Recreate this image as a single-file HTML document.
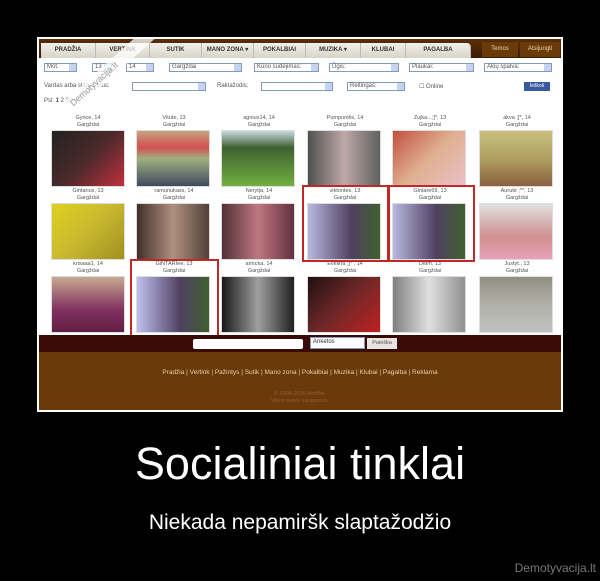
<!DOCTYPE html>
<html><head><meta charset="utf-8"><style>
*{margin:0;padding:0;box-sizing:border-box}
body{width:600px;height:581px;background:#000;position:relative;overflow:hidden;font-family:"Liberation Sans",sans-serif}
.frame{position:absolute;left:37px;top:37px;width:526px;height:375px;border:2px solid #fff;background:#fff;overflow:hidden}
.a{position:absolute}
.nav{left:0;top:0;width:522px;height:19px;background:linear-gradient(#5a2e08,#3a1c04)}
.tab{position:absolute;top:4px;height:15px;background:linear-gradient(#f2f0ea,#d8d4c8);font-size:6px;color:#333;text-align:center;line-height:15px;font-weight:bold;border-right:1px solid #bbb}
.rt{position:absolute;top:3px;height:15px;background:#6a3a08;color:#e8d8b0;font-size:6px;line-height:15px;text-align:center}
.sel{position:absolute;height:9px;border:1px solid #7f9db9;background:#fff;font-size:6px;color:#555;line-height:7px;padding-left:2px}
.sel:after{content:"";position:absolute;right:0;top:0;width:7px;height:7px;background:#c4d4f0}
.txt{position:absolute;font-size:6px;color:#555}
.nm{position:absolute;width:86px;text-align:center;font-size:5.5px;color:#555;line-height:6.5px}
.ph{position:absolute;width:74px;height:57px;border:1px solid #ddd}
.red{position:absolute;border:2px solid #c0282a}
</style></head><body>
<div class="frame">
<div class="a nav">
<div class="tab" style="left:2px;width:55px">PRADŽIA</div>
<div class="tab" style="left:57px;width:54px">VERTINK</div>
<div class="tab" style="left:111px;width:52px">SUTIK</div>
<div class="tab" style="left:163px;width:52px">MANO ZONA ▾</div>
<div class="tab" style="left:215px;width:52px">POKALBIAI</div>
<div class="tab" style="left:267px;width:55px">MUZIKA ▾</div>
<div class="tab" style="left:322px;width:45px">KLUBAI</div>
<div class="tab" style="left:367px;width:65px;border-radius:0 4px 0 0">PAGALBA</div>
<div class="rt" style="left:443px;width:36px">Temos</div>
<div class="rt" style="left:481px;width:40px">Atsijungti</div>
</div>
<div class="sel" style="left:5px;top:24px;width:33px">Mot.</div>
<div class="sel" style="left:53px;top:24px;width:20px">13</div>
<div class="sel" style="left:87px;top:24px;width:28px">14</div>
<div class="sel" style="left:130px;top:24px;width:73px">Gargždai</div>
<div class="sel" style="left:215px;top:24px;width:65px">Kūno sudėjimas:</div>
<div class="sel" style="left:290px;top:24px;width:70px">Ūgis:</div>
<div class="sel" style="left:370px;top:24px;width:65px">Plaukai:</div>
<div class="sel" style="left:445px;top:24px;width:68px">Akių spalva:</div>
<div class="txt" style="left:5px;top:44px">Vardas arba slapyvardis:</div>
<div class="sel" style="left:93px;top:43px;width:74px;height:9px"></div>
<div class="txt" style="left:178px;top:44px">Raktažodis:</div>
<div class="sel" style="left:222px;top:43px;width:72px;height:9px"></div>
<div class="sel" style="left:308px;top:43px;width:58px;height:9px">Reitingas:</div>
<div class="txt" style="left:380px;top:44px">☐ Online</div>
<div class="a" style="left:485px;top:43px;width:26px;height:9px;background:#3a5aa0;color:#fff;font-size:5px;text-align:center;line-height:9px">Ieškoti</div>
<div class="txt" style="left:5px;top:59px">Psl: <b>1</b> 2 3 &gt;</div>
<div class="nm" style="left:6px;top:76px">Gynce, 14<br>Gargždai</div>
<div class="nm" style="left:92px;top:76px">Vitute, 13<br>Gargždai</div>
<div class="nm" style="left:177px;top:76px">agniux14, 14<br>Gargždai</div>
<div class="nm" style="left:263px;top:76px">Pumpurėlis, 14<br>Gargždai</div>
<div class="nm" style="left:348px;top:76px">Zujka...;]*, 13<br>Gargždai</div>
<div class="nm" style="left:435px;top:76px">akva ;]*, 14<br>Gargždai</div>
<div class="ph" style="left:12px;top:91px;background:linear-gradient(135deg,#222,#4a2a2a 50%,#c03040)"></div>
<div class="ph" style="left:97px;top:91px;background:linear-gradient(#c8a080,#d05050 30%,#a0b080 50%,#404a60)"></div>
<div class="ph" style="left:182px;top:91px;background:linear-gradient(#c8d8e0,#406030 30%,#70b040)"></div>
<div class="ph" style="left:268px;top:91px;background:linear-gradient(90deg,#505050,#c0a8a8,#606060)"></div>
<div class="ph" style="left:353px;top:91px;background:linear-gradient(135deg,#c05040,#e0b090,#e8c0c8)"></div>
<div class="ph" style="left:440px;top:91px;background:linear-gradient(#c8c080,#b0a060 50%,#8a6040)"></div>
<div class="nm" style="left:6px;top:149px">Gintariux, 13<br>Gargždai</div>
<div class="nm" style="left:92px;top:149px">ramunukass, 14<br>Gargždai</div>
<div class="nm" style="left:177px;top:149px">Nerytja, 14<br>Gargždai</div>
<div class="nm" style="left:263px;top:149px">viktontes, 13<br>Gargždai</div>
<div class="nm" style="left:348px;top:149px">Gintare69, 13<br>Gargždai</div>
<div class="nm" style="left:435px;top:149px">Aurutė ;**, 13<br>Gargždai</div>
<div class="ph" style="left:12px;top:164px;background:linear-gradient(135deg,#e0d020,#c8b830,#a09020)"></div>
<div class="ph" style="left:97px;top:164px;background:linear-gradient(90deg,#403028,#b09080,#504038)"></div>
<div class="ph" style="left:182px;top:164px;background:linear-gradient(90deg,#503038,#c07880,#603040)"></div>
<div class="ph" style="left:268px;top:164px;background:linear-gradient(90deg,#b8b8e0,#504060 60%,#406030)"></div>
<div class="ph" style="left:353px;top:164px;background:linear-gradient(90deg,#b8b8e0,#504060 60%,#406030)"></div>
<div class="ph" style="left:440px;top:164px;background:linear-gradient(#e0e0e0,#d09090 60%,#e8a0b8)"></div>
<div class="nm" style="left:6px;top:222px">krisaaa1, 14<br>Gargždai</div>
<div class="nm" style="left:92px;top:222px">GiNTARIee, 13<br>Gargždai</div>
<div class="nm" style="left:177px;top:222px">arincka, 14<br>Gargždai</div>
<div class="nm" style="left:263px;top:222px">Evelina ;]* , 14<br>Gargždai</div>
<div class="nm" style="left:348px;top:222px">Delm, 13<br>Gargždai</div>
<div class="nm" style="left:435px;top:222px">Justyt., 13<br>Gargždai</div>
<div class="ph" style="left:12px;top:237px;background:linear-gradient(#c8a890,#803060 60%,#602040)"></div>
<div class="ph" style="left:97px;top:237px;background:linear-gradient(90deg,#c0c0f0,#504060 60%,#406030)"></div>
<div class="ph" style="left:182px;top:237px;background:linear-gradient(90deg,#181818,#a0a0a0,#202020)"></div>
<div class="ph" style="left:268px;top:237px;background:linear-gradient(135deg,#201010,#702828,#c02020)"></div>
<div class="ph" style="left:353px;top:237px;background:linear-gradient(90deg,#808080,#e0e0e0,#909090)"></div>
<div class="ph" style="left:440px;top:237px;background:linear-gradient(#909080,#b0b0a8 50%,#c0c0c0)"></div>
<div class="red" style="left:263px;top:146px;width:87px;height:77px"></div>
<div class="red" style="left:349px;top:146px;width:87px;height:77px"></div>
<div class="red" style="left:91px;top:220px;width:89px;height:79px"></div>
<div class="a" style="left:0;top:296px;width:522px;height:17px;background:#3a0a06"></div>
<div class="a" style="left:154px;top:300px;width:110px;height:10px;background:#fff;border-radius:2px"></div>
<div class="a" style="left:271px;top:298px;width:55px;height:12px;background:#fff;font-size:6px;color:#333;padding:1px 2px;border:1px solid #7f9db9">Anketos</div>
<div class="a" style="left:328px;top:299px;width:30px;height:11px;background:#e8e4e0;font-size:5.5px;color:#555;line-height:11px;text-align:center">Paieška</div>
<div class="a" style="left:0;top:313px;width:522px;height:58px;background:#6a3a08"></div>
<div class="a" style="left:0;top:330px;width:522px;text-align:center;font-size:6.5px;color:#e8d0a8">Pradžia | Vertink | Pažintys | Sutik | Mano zona | Pokalbiai | Muzika | Klubai | Pagalba | Reklama</div>
<div class="a" style="left:0;top:352px;width:522px;text-align:center;font-size:5.5px;color:#8a6040;line-height:7px">© 2006-2010 HotNot.<br>Visos teisės saugomos.</div>
<div class="a" style="left:-20px;top:38px;width:150px;height:14px;background:rgba(255,255,255,0.75);transform:rotate(-42deg);transform-origin:center;color:#999;font-size:9px;text-align:center;line-height:14px">Demotyvacija.lt</div>
</div>
<div class="a" style="left:0;top:438px;width:600px;text-align:center;color:#fff;font-size:45px">Socialiniai tinklai</div>
<div class="a" style="left:0;top:511px;width:600px;text-align:center;color:#fff;font-size:21px">Niekada nepamiršk slaptažodžio</div>
<div class="a" style="right:4px;top:561px;color:#777;font-size:12px">Demotyvacija.lt</div>
</body></html>
